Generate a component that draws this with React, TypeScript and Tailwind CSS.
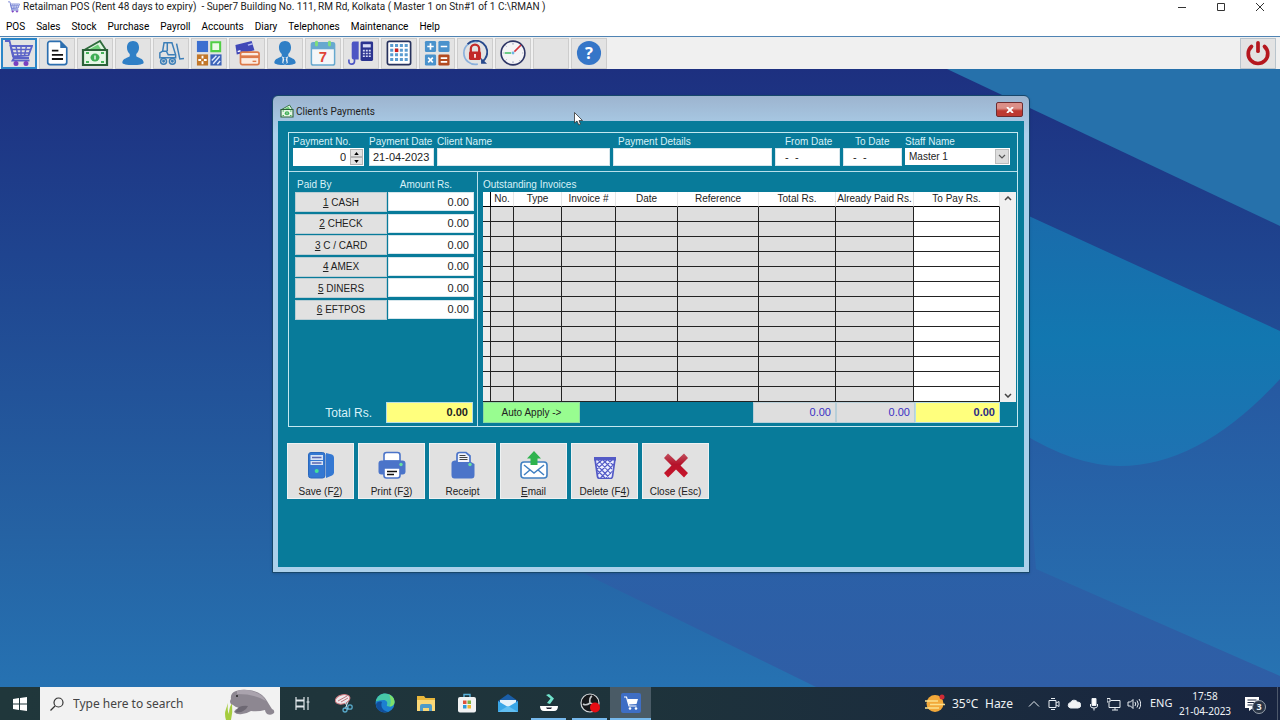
import React from 'react';

const MENU = ['POS', 'Sales', 'Stock', 'Purchase', 'Payroll', 'Accounts', 'Diary', 'Telephones', 'Maintenance', 'Help'];

const CartIcon = ({ className, color = '#5a62c8', wheel = '#7a3fc0' }: { className: string; color?: string; wheel?: string }) => (
  <svg className={className} viewBox="0 0 28 28" fill="none" stroke={color} strokeWidth="1.8">
    <path d="M0 2h4.500l4.500 17h15" />
    <path d="M5.500 7h21.500l-3.500 9.500-15.500 1z" />
    <path d="M6.500 10.500h19M7.500 14h17M11 7l2 10.500M16 7v10M21.500 7l-2 9.500" strokeWidth="1.400" />
    <path d="M9 19l-1.500 2.500h17" />
    <circle cx="11" cy="24.500" r="1.600" fill={wheel} stroke={wheel} />
    <circle cx="21" cy="24.500" r="1.600" fill={wheel} stroke={wheel} />
  </svg>
);

const MoneyIcon = ({ className }: { className: string }) => (
  <svg className={className} viewBox="0 0 28 28" fill="none">
    <path d="M1.500 12L19 2l6 9" fill="#dff5e0" stroke="#2e6b3c" strokeWidth="1.800" />
    <path d="M7 11l10-5.500 3.500 5.500z" fill="#6dcf78" />
    <path d="M2 11h24v15H2z" fill="#e6f7e6" stroke="#2b6238" strokeWidth="2.200" />
    <path d="M5 14h3M20 14h3M5 23h3M20 23h3" stroke="#46b45a" strokeWidth="2.200" />
    <ellipse cx="14" cy="18.500" rx="4.500" ry="4" fill="#3fae55" />
    <path d="M14 16.500v4" stroke="#fff" strokeWidth="1.300" />
  </svg>
);

const DocIcon = () => (
  <svg className="size-[26px]" viewBox="0 0 28 28" fill="none">
    <path d="M6.500 1.500h11l7 7v15.500a2.500 2.500 0 0 1-2.500 2.500h-15.500A2.500 2.500 0 0 1 4 24v-20A2.500 2.500 0 0 1 6.500 1.500z" fill="#fff" stroke="#2c6fb0" strokeWidth="1.800" />
    <path d="M17.500 1.500l7 7h-7z" fill="#2c6fb0" />
    <path d="M8.500 11.500h7M8.500 16h12M8.500 20.500h12" stroke="#111" strokeWidth="2" />
  </svg>
);

const UserIcon = ({ tie }: { tie?: boolean }) => (
  <svg className="size-[26px]" viewBox="0 0 28 28" fill="#2f7fc6">
    <path d="M14 1c4.200 0 6.500 3 6.500 7 0 3-1.200 5.500-3 7v2.500c1.500 1.800 8 2 8 7 0 1.500-5 2.500-11.500 2.500S2.500 26 2.500 24.500c0-5 6.500-5.200 8-7V15c-1.800-1.500-3-4-3-7 0-4 2.300-7 6.500-7z" />
    {tie && <path d="M10.500 17.500l3.500 2 3.500-2-1 3 .5 4-3 2.500-3-2.500.5-4z" fill="#e8eef5" />}
    {tie && <path d="M12.500 19.500h3l-.7 1.500 1.200 4-2 2-2-2 1.200-4z" fill="#2f7fc6" />}
  </svg>
);

const ForkliftIcon = () => (
  <svg className="size-[26px]" viewBox="0 0 28 28" fill="none" stroke="#3d7fb8" strokeWidth="1.600">
    <path d="M5 12l1.500-9h8.500l4 13v4M5 12l-3 2v6M5 12h4l2 4h7M10 3v9" />
    <path d="M20 4l3.500 16.500L28 20M2.500 19h16" />
    <circle cx="6" cy="23" r="3.200" fill="#e1e1e1" />
    <circle cx="15.500" cy="23" r="3.200" fill="#e1e1e1" />
    <circle cx="6" cy="23" r=".8" />
    <circle cx="15.500" cy="23" r=".8" />
  </svg>
);

const TilesIcon = () => (
  <svg className="size-[26px]" viewBox="0 0 28 28" fill="none">
    <path d="M1 1h12v12H1z" fill="#3b6fd0" />
    <path d="M16.500 2.500h9.500v9.500h-9.500z" fill="#eefbe8" stroke="#52cf45" strokeWidth="2.200" />
    <path d="M1 15.500h12v12H1z" fill="#c2772a" />
    <path d="M7 17v3M7 23v3M2.500 21.500h3M8.500 21.500h3" stroke="#fff" strokeWidth="2" />
    <path d="M15.500 15.500h12v12h-12z" fill="#3b62b8" />
    <path d="M17 22l5-5M18.500 25.500l7-8M23 26l3-3.500" stroke="#dfe8fb" strokeWidth="1.600" />
  </svg>
);

const CardsIcon = () => (
  <svg className="size-[26px]" viewBox="0 0 28 28" fill="none">
    <path d="M1.500 5.500L19 1l3 10-19 4.500z" fill="#4048b8" />
    <path d="M4 12.500l3-1" stroke="#fff" strokeWidth="1.600" />
    <path d="M15 5.500l5-1.500" stroke="#b9c0f2" strokeWidth="1.600" />
    <rect x="7" y="13" width="20" height="13.500" rx="2" fill="#fbece2" stroke="#dd7a4a" strokeWidth="1.800" />
    <path d="M7 18h20" stroke="#dd7a4a" strokeWidth="3" />
    <path d="M20 23h4" stroke="#dd7a4a" strokeWidth="1.500" />
  </svg>
);

const CalendarIcon = () => (
  <svg className="size-[26px]" viewBox="0 0 28 28" fill="none">
    <rect x="1.500" y="3" width="25" height="24" rx="2" fill="#f4f6f8" stroke="#67a9cf" strokeWidth="1.600" />
    <path d="M1.500 3h25v7h-25z" fill="#67a9cf" />
    <path d="M7 2.500v3M21 2.500v3" stroke="#7ede7c" strokeWidth="3.200" strokeLinecap="round" />
    <text x="14" y="24" textAnchor="middle" fontSize="16" fontWeight="bold" fontFamily="Liberation Sans, sans-serif" fill="#e04438">7</text>
  </svg>
);

const PhoneIcon = () => (
  <svg className="size-[26px]" viewBox="0 0 28 28" fill="none">
    <path d="M6 1.500h5.500v19.500H6c-1.500 0-2-1-2-3v-13.500c0-2 .5-3 2-3z" fill="#4c55c4" />
    <path d="M7 20v3c0 4-6 4-6 .5V21" stroke="#4c55c4" strokeWidth="1.800" />
    <rect x="13.500" y="1.500" width="13.500" height="21" rx="1.500" fill="#2b3490" />
    <path d="M16 4.500h8.500v3.500H16z" fill="#d8dcf5" />
    <path d="M16 11.500h8.500M16 14.500h8.500M16 17.500h8.500" stroke="#d8dcf5" strokeWidth="1.800" strokeDasharray="2.100 1.100" />
  </svg>
);

const GridIcon = () => (
  <svg className="size-[26px]" viewBox="0 0 28 28" fill="none">
    <rect x="1.500" y="1.500" width="25" height="25" rx="2" fill="#fff" stroke="#26315c" strokeWidth="1.800" />
    {[4, 9, 14, 19].map((y) => (
      <path key={y} d={`M4.500 ${y + 2}h19`} stroke="#5a9bd0" strokeWidth="3.200" strokeDasharray="3.300 1.900" />
    ))}
    <path d="M9.500 9.200h3.800v3.800H9.500z" fill="#cf1c1c" />
  </svg>
);

const CalcIcon = () => (
  <svg className="size-[26px]" viewBox="0 0 28 28" fill="none">
    <rect x="1" y="1" width="12" height="12" rx="1.500" fill="#4a92cc" />
    <rect x="15.500" y="1" width="12" height="12" rx="1.500" fill="#4a92cc" />
    <rect x="1" y="15.500" width="12" height="12" rx="1.500" fill="#4a92cc" />
    <rect x="15.500" y="15.500" width="12" height="12" rx="1.500" fill="#b24a20" />
    <path d="M7 3.500v7M3.500 7h7M18 7h7M4.500 19l5 5M9.500 19l-5 5M18 19.500h7M18 23.500h7" stroke="#fff" strokeWidth="1.800" />
  </svg>
);

const LockIcon = () => (
  <svg className="size-[26px]" viewBox="0 0 28 28" fill="none">
    <path d="M17 26A12.300 12.300 0 1 1 17 2" stroke="#8ab0dc" strokeWidth="1.800" />
    <path d="M6 4.500A12.300 12.300 0 0 1 25 20l-2.500 3" stroke="#27498c" strokeWidth="2" />
    <path d="M20.500 19.500v6h6.500z" fill="#27498c" />
    <path d="M9.500 13V9.500a4.500 4.500 0 0 1 9 0V13" stroke="#c22a2a" strokeWidth="2.400" />
    <rect x="7.500" y="12.500" width="13" height="9" rx="1.500" fill="#c22a2a" />
    <path d="M14 15v4" stroke="#fff" strokeWidth="1.800" />
  </svg>
);

const ClockIcon = () => (
  <svg className="size-[26px]" viewBox="0 0 28 28" fill="none">
    <circle cx="14" cy="14" r="12.800" fill="#f4f4f6" stroke="#2c3464" strokeWidth="1.700" />
    <path d="M14 3v2M14 23v2M3 14h1M24 14h1M6 6l1 1M21 22l1 1M6 22l1-1" stroke="#8d94b0" strokeWidth="1" />
    <path d="M5 14h7" stroke="#3fbf5f" strokeWidth="1.600" />
    <path d="M15.500 12.500l7-7" stroke="#d4313b" strokeWidth="1.600" />
    <circle cx="14" cy="14" r="1.500" fill="#6ab6e6" />
  </svg>
);

const HelpIcon = () => (
  <svg className="size-[26px]" viewBox="0 0 28 28">
    <circle cx="14" cy="14" r="13" fill="#3576c8" />
    <text x="14" y="20.500" textAnchor="middle" fontSize="18" fontWeight="bold" fontFamily="Open Sans, sans-serif" fill="#fff">?</text>
  </svg>
);

const PowerIcon = () => (
  <svg className="size-[26px]" viewBox="0 0 28 28" fill="none" stroke="#b5171e" strokeWidth="4" strokeLinecap="round">
    <path d="M7 7a10.500 10.500 0 1 0 14 0" />
    <path d="M14 3v9" />
  </svg>
);

const TOOLS = [
  { name: 'Point of sale', icon: <CartIcon className="size-7" /> },
  { name: 'Documents', icon: <DocIcon /> },
  { name: 'Payments', icon: <MoneyIcon className="size-7" /> },
  { name: 'Clients', icon: <UserIcon /> },
  { name: 'Suppliers', icon: <ForkliftIcon /> },
  { name: 'Stock', icon: <TilesIcon /> },
  { name: 'Cards', icon: <CardsIcon /> },
  { name: 'Staff', icon: <UserIcon tie /> },
  { name: 'Diary', icon: <CalendarIcon /> },
  { name: 'Telephones', icon: <PhoneIcon /> },
  { name: 'Planner', icon: <GridIcon /> },
  { name: 'Calculator', icon: <CalcIcon /> },
  { name: 'Lock', icon: <LockIcon /> },
  { name: 'Clock', icon: <ClockIcon /> },
  { name: 'Spare', icon: null },
  { name: 'Help', icon: <HelpIcon /> },
];

const TitleBar = () => (
  <header className="flex h-[14px] items-center bg-white pl-2 font-['Roboto',sans-serif] text-[10px] leading-[14px] text-[#222]">
    <CartIcon className="size-3" color="#6a78d0" />
    <h1 className="ml-[3px] whitespace-pre">{'Retailman POS (Rent 48 days to expiry)  - Super7 Building No. 111, RM Rd, Kolkata ( Master 1 on Stn#1 of 1 C:\\RMAN )'}</h1>
    <div className="ml-auto flex pr-px text-[#333]">
      <button aria-label="Minimize" className="flex w-[39px] justify-center">
        <svg className="size-[10px]" viewBox="0 0 10 10" stroke="currentColor"><path d="M1 5.500h8" /></svg>
      </button>
      <button aria-label="Maximize" className="flex w-[39px] justify-center">
        <svg className="size-[10px]" viewBox="0 0 10 10" fill="none" stroke="currentColor"><path d="M1.500 1.500h7v7h-7z" /></svg>
      </button>
      <button aria-label="Close" className="flex w-[39px] justify-center">
        <svg className="size-[10px]" viewBox="0 0 10 10" stroke="currentColor"><path d="M1 1l8 8M9 1L1 9" /></svg>
      </button>
    </div>
  </header>
);

const MenuBar = () => (
  <nav className="flex h-[22px] items-center gap-[11px] bg-white pt-1 pl-[6px] font-['Roboto',sans-serif] text-[10px] leading-[14px] text-black">
    {MENU.map((m) => (
      <button key={m}>{m}</button>
    ))}
  </nav>
);

const Toolbar = () => (
  <div className="flex h-[33px] items-center gap-[2px] border-t border-[#4f83b3] bg-[#f0f0f0] pr-1 pl-[1px]">
    {TOOLS.map((t, i) => (
      <button
        key={t.name}
        aria-label={t.name}
        className={`flex h-[31px] w-9 items-center justify-center bg-[#e3e3e3] ${i === 0 ? 'border-2 border-[#2b86c8]' : 'border border-[#cdcdcd]'}`}
      >
        {t.icon}
      </button>
    ))}
    <button aria-label="Exit" className="ml-auto flex h-[31px] w-9 items-center justify-center border border-[#b9c4cc] bg-[#e3e3e3]">
      <PowerIcon />
    </button>
  </div>
);

const Wallpaper = () => (
  <svg className="absolute inset-0 h-full w-full" viewBox="0 0 1280 618" preserveAspectRatio="none">
    <defs>
      <linearGradient id="sky" x1="0" y1="0" x2="0" y2="1">
        <stop offset="0" stopColor="#1d3080" />
        <stop offset=".3" stopColor="#1f448f" />
        <stop offset=".75" stopColor="#2562a3" />
        <stop offset="1" stopColor="#2672b2" />
      </linearGradient>
      <linearGradient id="band" x1="0" y1="0" x2="0" y2="1">
        <stop offset="0" stopColor="#2463a8" />
        <stop offset="1" stopColor="#2f5ea6" />
      </linearGradient>
      <linearGradient id="drop" x1="0" y1="0" x2="0" y2="1">
        <stop offset="0" stopColor="#1a6bab" />
        <stop offset=".5" stopColor="#1277b0" />
        <stop offset="1" stopColor="#1f72b2" />
      </linearGradient>
      <linearGradient id="low" x1="0" y1="0" x2="0" y2="1">
        <stop offset="0" stopColor="#2657a0" />
        <stop offset="1" stopColor="#2773b2" />
      </linearGradient>
    </defs>
    <path d="M0 0h1280v618H0z" fill="url(#sky)" />
    <path d="M947 0h333v157z" fill="#2671ab" />
    <path d="M575 500L700 290h580v328H816z" fill="url(#band)" />
    <path d="M1020 290h260v317L1036 500z" fill="url(#low)" />
    <path d="M1020 143l260 119v48q-80 87-160 87-45 0-100-34z" fill="url(#drop)" />
  </svg>
);

const Field = ({ id, label, className, labelClass = '', value = '' }: { id: string; label: string; className: string; labelClass?: string; value?: string }) => (
  <div className={className}>
    <label htmlFor={id} className={`block h-[14px] text-[10px] leading-[16px] whitespace-nowrap text-[#d8f2f8] ${labelClass}`}>{label}</label>
    <input id={id} defaultValue={value} className="block h-[18px] w-full border border-[#d6e6ec] bg-white px-[3px] text-[11px] text-[#222]" />
  </div>
);

const PaymentHeader = () => (
  <div className="flex h-[39px] gap-[3px] border-b border-[#b8e0ea] pt-px pr-[7px] pl-1">
    <div className="w-[73px]">
      <label htmlFor="payno" className="block h-[14px] text-[10px] leading-[16px] whitespace-nowrap text-[#d8f2f8]">Payment No.</label>
      <div className="flex h-[18px] w-[71px] items-center bg-white">
        <input id="payno" defaultValue="0" className="h-full w-full min-w-0 pr-1 text-right text-[11px] text-[#222]" />
        <div className="flex h-4 w-[14px] shrink-0 flex-col justify-between pr-px">
          <button aria-label="Next payment" className="flex h-2 items-center justify-center border border-[#b4b4b4] bg-[#e3e3e3]">
            <svg className="h-[3px] w-[5px]" viewBox="0 0 6 4"><path d="M3 0l3 4H0z" /></svg>
          </button>
          <button aria-label="Previous payment" className="flex h-2 items-center justify-center border border-[#b4b4b4] bg-[#e3e3e3]">
            <svg className="h-[3px] w-[5px]" viewBox="0 0 6 4"><path d="M3 4l3-4H0z" /></svg>
          </button>
        </div>
      </div>
    </div>
    <Field id="paydate" label="Payment Date" value="21-04-2023" className="w-[65px]" />
    <Field id="client" label="Client Name" className="min-w-0 flex-1" />
    <Field id="details" label="Payment Details" labelClass="pl-[5px]" className="w-[159px]" />
    <Field id="from" label="From Date" labelClass="pl-[10px]" value="  -  -" className="w-[65px]" />
    <Field id="to" label="To Date" labelClass="pl-3" value="  -  -" className="w-[59px]" />
    <div className="w-[105px]">
      <label htmlFor="staff" className="block h-[14px] text-[10px] leading-[16px] text-[#d8f2f8]">Staff Name</label>
      <div className="relative">
        <select id="staff" className="block h-[17px] w-full appearance-none bg-white pl-1 text-[10px] text-[#222]">
          <option>Master 1</option>
        </select>
        <span className="pointer-events-none absolute top-px right-px flex h-[15px] w-[14px] items-center justify-center border border-[#bcbcbc] bg-[#dcdcdc]">
          <svg className="h-[5px] w-2" viewBox="0 0 8 5" fill="none" stroke="#555" strokeWidth="1.200"><path d="M1 1l3 3 3-3" /></svg>
        </span>
      </div>
    </div>
  </div>
);

const METHODS = [
  ['1', ' CASH'],
  ['2', ' CHECK'],
  ['3', ' C / CARD'],
  ['4', ' AMEX'],
  ['5', ' DINERS'],
  ['6', ' EFTPOS'],
];

const PaidBy = () => (
  <section className="flex w-[189px] shrink-0 flex-col border-r border-[#b8e0ea] pt-[5px] pr-[3px] pb-[3px] pl-[6px]">
    <div className="flex h-[15px] justify-between pr-[22px] pl-[2px] text-[10px] leading-[15px] text-[#d8f2f8]">
      <span>Paid By</span>
      <span>Amount Rs.</span>
    </div>
    <div className="flex h-32 flex-col justify-between">
      {METHODS.map(([key, name]) => (
        <div key={key} className="flex h-5 items-start gap-px">
          <button className="h-5 w-[92px] shrink-0 border border-[#b9cdd4] bg-[#e1e1e1] text-[10px] text-[#222]">
            <u>{key}</u>{name}
          </button>
          <input aria-label={name} defaultValue="0.00" className="h-[19px] w-full min-w-0 border border-[#d6e6ec] bg-white pr-1 text-right text-[11px] text-[#222]" />
        </div>
      ))}
    </div>
    <div className="mt-auto flex items-center gap-[14px]">
      <label htmlFor="total" className="ml-auto text-[12px] text-[#d8f2f8]">Total Rs.</label>
      <input id="total" defaultValue="0.00" className="mr-px h-[21px] w-[87px] border border-[#b8dfe4] bg-[#ffff7d] pr-1 pb-px text-right text-[11px] font-bold text-[#222]" />
    </div>
  </section>
);

const COLUMNS = [
  { label: '', width: 'w-2' },
  { label: 'No.', width: 'w-[23px]' },
  { label: 'Type', width: 'w-12' },
  { label: 'Invoice #', width: 'w-[54px]' },
  { label: 'Date', width: 'w-[62px]' },
  { label: 'Reference', width: 'w-[81px]' },
  { label: 'Total Rs.', width: 'w-[77px]' },
  { label: 'Already Paid Rs.', width: 'w-[78px]' },
  { label: 'To Pay Rs.', width: 'w-[86px]' },
];

const cellColor = (i: number) => {
  if (i === 0) return 'bg-[#ececec]';
  return i === COLUMNS.length - 1 ? 'bg-white' : 'bg-[#dedede]';
};

const Invoices = () => (
  <section className="flex min-w-0 flex-1 flex-col pt-[5px] pl-[5px]">
    <h3 className="h-[15px] text-[10px] leading-[15px] text-[#d8f2f8]">Outstanding Invoices</h3>
    <div className="flex">
      <table className="w-[517px] table-fixed border-separate border-spacing-0 text-[10px] text-[#222]">
        <thead>
          <tr>
            {COLUMNS.map((c, i) => (
              <th
                key={c.label}
                className={`h-[15px] border-r border-b border-b-black bg-white p-0 leading-[14px] font-normal whitespace-nowrap ${c.width} ${i === 0 ? 'border-r-black' : 'border-r-[#e6e6e6]'}`}
              >
                {c.label}
              </th>
            ))}
          </tr>
        </thead>
        <tbody>
          {Array.from({ length: 13 }, (_, r) => (
            <tr key={r}>
              {COLUMNS.map((c, i) => (
                <td key={c.label} className={`h-[15px] border-r border-b border-[#222] p-0 ${cellColor(i)}`} />
              ))}
            </tr>
          ))}
        </tbody>
      </table>
      <div className="flex w-4 flex-col items-center justify-between bg-[#f0f0f0] py-1">
        <svg className="h-[5px] w-2" viewBox="0 0 8 5" fill="none" stroke="#444" strokeWidth="1.500"><path d="M1 4l3-3 3 3" /></svg>
        <svg className="h-[5px] w-2" viewBox="0 0 8 5" fill="none" stroke="#444" strokeWidth="1.500"><path d="M1 1l3 3 3-3" /></svg>
      </div>
    </div>
    <div className="flex h-[21px] pr-[17px]">
      <button className="w-[97px] border border-[#8edba0] bg-[#98fd90] text-[10px] text-[#222]">Auto Apply -&gt;</button>
      <input aria-label="Total" defaultValue="0.00" className="ml-auto w-[83px] border border-[#b8cfd8] bg-[#dedede] pr-1 text-right text-[11px] text-[#3a2fc4]" />
      <input aria-label="Already paid" defaultValue="0.00" className="w-[79px] border border-[#b8cfd8] bg-[#dedede] pr-1 text-right text-[11px] text-[#3a2fc4]" />
      <input aria-label="To pay" defaultValue="0.00" className="w-[85px] border border-[#b8dfe4] bg-[#ffff7d] pr-1 text-right text-[11px] font-bold text-[#2a2a86]" />
    </div>
  </section>
);

const ACTIONS = [
  {
    id: 'save',
    label: <>Save (F<u>2</u>)</>,
    icon: (
      <>
        <path d="M19 2l6 1.500q2 .8 2 3v15q0 2-2 3L19 27z" fill="#3478d2" />
        <rect x="1.500" y="1.500" width="16.500" height="25.500" rx="2.500" fill="#3478d2" stroke="#2a68bd" />
        <path d="M3.500 4h12.500v5H3.500zM3.500 10h12.500v4H3.500z" fill="#d5e2f5" />
        <path d="M5 6.500h9.500M5 12h9.500" stroke="#5a67b0" strokeWidth="1.500" />
        <circle cx="9.700" cy="20" r="2" fill="#42e29a" />
      </>
    ),
  },
  {
    id: 'print',
    label: <>Print (F<u>3</u>)</>,
    icon: (
      <>
        <path d="M6 10V4q0-2.500 2.500-2.500h11Q22 1.500 22 4v6z" fill="#fff" stroke="#4b74c9" strokeWidth="1.600" />
        <path d="M3.500 9.500h21q3 0 3 3v8q0 3-3 3h-21q-3 0-3-3v-8q0-3 3-3z" fill="#4b74c9" />
        <path d="M6 17h16v7.500q0 2.500-2.500 2.500h-11Q6 27 6 24.500z" fill="#fff" stroke="#4b74c9" strokeWidth="1.600" />
        <path d="M9 20.500h10M9 23.500h7" stroke="#111" strokeWidth="1.500" />
        <circle cx="23" cy="13.500" r="1.700" fill="#69e0a0" />
      </>
    ),
  },
  {
    id: 'receipt',
    label: <>Receipt</>,
    icon: (
      <>
        <path d="M8 12V4q0-2.500 2.500-2.500h6.500L21 5v7z" fill="#f0f3fb" stroke="#4b74c9" strokeWidth="1.700" />
        <path d="M10.500 4.500h6M10.500 6.500h8M10.500 8.500h8" stroke="#444" strokeWidth="1" />
        <path d="M5.500 9.500h2L9 11h13l3.500 2v11q0 3.500-3 3.500h-17q-3 0-3-3.500V12.500q0-2.500 3-3z" fill="#4b74c9" />
        <circle cx="21" cy="13.500" r="1.700" fill="#69e0a0" />
      </>
    ),
  },
  {
    id: 'email',
    label: <><u>E</u>mail</>,
    icon: (
      <>
        <rect x="1" y="11" width="26" height="16" rx="3" fill="#fff" stroke="#4180c2" strokeWidth="1.600" />
        <path d="M4 14l10 8 10-8M4 24l6.500-5.500M24 24l-6.500-5.500" fill="none" stroke="#4180c2" strokeWidth="1.500" />
        <path d="M14 0l7 7.500h-3.500V14h-7V7.500H7z" fill="#2fb34e" />
      </>
    ),
  },
  {
    id: 'delete',
    label: <>Delete (F<u>4</u>)</>,
    icon: (
      <>
        <path d="M4 8h20l-2.500 17.500q-.3 2-2.500 2H9q-2.200 0-2.500-2z" fill="#eef0ff" stroke="#535ac6" strokeWidth="1.700" />
        <path d="M7 9l13 14M12 9l9 9M17 9l5 5M5 13l13 13.500M6 19l8 8M21 9L7 23M16 9L6 18M11 9l-5 4M23 13L9.500 27M21.500 20L15 27" stroke="#535ac6" strokeWidth="1.100" />
        <path d="M3 6h22v3.500H3z" fill="#535ac6" />
      </>
    ),
  },
  {
    id: 'close',
    label: <>Close (Esc)</>,
    icon: (
      <>
        <defs>
          <linearGradient id="cross" x1="0" y1="0" x2="0" y2="1">
            <stop offset="0" stopColor="#c0505e" />
            <stop offset=".45" stopColor="#b5122a" />
            <stop offset="1" stopColor="#c9142a" />
          </linearGradient>
        </defs>
        <path d="M6 2.500L14 10l8-7.500 4 4.500-7.500 7.500L26 22l-4 4.500-8-8-8 8L2 22l7.500-7.500L2 7z" fill="url(#cross)" />
      </>
    ),
  },
];

const PaymentsWindow = () => (
  <section className="absolute top-[26px] left-[272px] w-[758px] rounded-t-md border border-[#17476b] bg-linear-to-b from-[#9db4cf] to-[#abd0eb] to-8% px-[5px] pb-[5px] shadow-sm">
    <div className="flex h-[25px] items-center pt-[5px] pr-px pl-[2px] font-['Roboto',sans-serif] text-[10px] text-[#222]">
      <MoneyIcon className="size-[14px]" />
      <h2 className="ml-[2px]">Client's Payments</h2>
      <button aria-label="Close window" className="mb-[3px] ml-auto flex h-[15px] w-[27px] items-center justify-center rounded-[2px] border border-[#6d2c30] bg-linear-to-b from-[#dc8f88] from-40% to-[#bd3a32] to-60%">
        <svg className="h-[6px] w-2" viewBox="0 0 8 6" stroke="#fff" strokeWidth="1.800"><path d="M1 0l6 6M7 0L1 6" /></svg>
      </button>
    </div>
    <div className="h-[446px] bg-[#087b9a] pt-[11px]">
      <form className="mr-[6px] ml-[10px] border border-[#c4e8f0]">
        <PaymentHeader />
        <div className="flex h-[254px]">
          <PaidBy />
          <Invoices />
        </div>
      </form>
      <div className="mt-4 flex gap-1 pl-[9px]">
        {ACTIONS.map((a) => (
          <button key={a.id} className="flex h-14 w-[67px] flex-col items-center justify-between border border-[#eef2f3] bg-[#e1e1e1] pt-[7px] text-[10px] leading-[12px] text-[#222]">
            <svg className="size-7" viewBox="0 0 28 28">{a.icon}</svg>
            <span>{a.label}</span>
          </button>
        ))}
      </div>
    </div>
  </section>
);

const ManateeIcon = () => (
  <svg className="h-[33px] w-14" viewBox="0 0 56 33" fill="none">
    <path d="M2 33Q0 27 2 22l2-6q-1 8 1 11l1 6zM6 33q-2-7 0-13l2-4q1 9-1 17z" fill="#a5cc3e" />
    <path d="M7 12Q6 6 12 4q6-2 12-1 13 1 19 11 3 5 5 8 3 1 2 4-3 3-7 1-2-2-2-4-7 2-14 1-5 3-9 3-5 1-8-2 1-3 5-4-4-1-6-3-3-1-3-3 0-2 1-3z" fill="#8d8791" />
    <path d="M13 4q8-3 18 1 8 3 11 9-11-7-29-7z" fill="#aaa3ad" />
    <path d="M22 22q-6 5-11 3l4-5q5-2 9-1z" fill="#6d6873" />
    <circle cx="13" cy="9" r="1" fill="#222" />
  </svg>
);

const APPS = [
  {
    name: 'Task View',
    state: '',
    icon: <path d="M3 4v3h8V4M3 17v-3h8v3M3 8h8v5H3zM15 4v13M13.500 9h3" fill="none" stroke="#dfe6ea" strokeWidth="1.200" />,
  },
  {
    name: 'Snip & Sketch',
    state: '',
    icon: (
      <>
        <ellipse cx="8.500" cy="6.500" rx="7.500" ry="4.500" transform="rotate(-15 8 6)" fill="#f0e9ec" stroke="#d07a80" />
        <path d="M4 8l9-5M7 9l7-4" stroke="#b05560" strokeWidth=".8" />
        <path d="M11 8l3 9M14 9l-3 7" stroke="#cfe3ec" />
        <circle cx="16" cy="14" r="2.200" fill="none" stroke="#58a9c9" strokeWidth="1.300" />
        <circle cx="11" cy="17" r="2" fill="none" stroke="#58a9c9" strokeWidth="1.300" />
      </>
    ),
  },
  {
    name: 'Edge',
    state: '',
    icon: (
      <>
        <circle cx="10" cy="10" r="9.500" fill="#1c7fd0" />
        <path d="M.7 8.500C2 3 6 .5 10 .5c6 0 9.500 4 9.500 8 0 3-2.500 5-5.500 5-2 0-2.500-1-2-2 1-2-.5-4.500-3.500-4.500-3 0-6 1-7.800 1.500z" fill="#46c8a8" />
        <path d="M14 1.500c4 2 5.500 5 5.500 7.500 0 2.500-2 4.500-5 4.500 2-3 1.500-8-.5-12z" fill="#7fe06a" />
        <path d="M7 9c-2 4 1 9.500 6 9.300-6 2.700-12-1-12-7C2 9 4.500 8 7 9z" fill="#124f9c" />
      </>
    ),
  },
  {
    name: 'File Explorer',
    state: '',
    icon: (
      <>
        <path d="M1 3h7l1.500 2H19v13H1z" fill="#e8b73c" />
        <path d="M1 7h18v11H1z" fill="#fbd878" />
        <path d="M4 18v-5q0-2 2-2h8q2 0 2 2v5h-3v-3H7v3z" fill="#4f9bc9" />
      </>
    ),
  },
  {
    name: 'Store',
    state: '',
    icon: (
      <>
        <path d="M7 5V1.500h6V5" fill="none" stroke="#58b2dc" strokeWidth="1.400" />
        <rect x="1" y="4" width="18" height="15.500" rx="2" fill="#f1f2f3" />
        <path d="M6 7.500h3.500V11H6z" fill="#e0523a" />
        <path d="M10.500 7.500H14V11h-3.500z" fill="#7cb342" />
        <path d="M6 12h3.500v3.500H6z" fill="#2d9cdb" />
        <path d="M10.500 12H14v3.500h-3.500z" fill="#f3b72f" />
      </>
    ),
  },
  {
    name: 'Mail',
    state: '',
    icon: (
      <>
        <path d="M0 8l10-7 10 7v3H0z" fill="#1a5ea8" />
        <path d="M2 7h16v8H2z" fill="#e6f2fa" />
        <path d="M0 8l10 6 10-6v11H0z" fill="#3aa6e6" />
        <path d="M0 19l10-6 10 6z" fill="#61bff2" />
      </>
    ),
  },
  {
    name: 'Filmora',
    state: 'open',
    icon: (
      <>
        <path d="M7 2l4.500 3.500L8 10l3 1 4-5.500L10 1z" fill="#71e3cd" />
        <path d="M1 13h18q0 5-4 5H5q-4 0-4-5z" fill="#fff" />
        <path d="M7 14.500h6l-1 1.500H8z" fill="#223" />
      </>
    ),
  },
  {
    name: 'OBS Studio',
    state: 'open',
    icon: (
      <>
        <circle cx="10" cy="10" r="9" fill="#16181b" stroke="#d5d8db" strokeWidth="1.200" />
        <path d="M10 10q-1-5 2-7M10 10q5 1 6 4M10 10q-4 3-7 1" fill="none" stroke="#c3c7ca" strokeWidth="1.600" />
        <circle cx="15" cy="14.500" r="5" fill="#e60d14" />
      </>
    ),
  },
  {
    name: 'Retailman POS',
    state: 'active',
    icon: (
      <>
        <rect x="0" y="0" width="20" height="20" rx="2" fill="#3e6ec4" />
        <path d="M3 4h2.500l2.500 9h7.500" fill="none" stroke="#fff" strokeWidth="1.200" />
        <path d="M6.500 6h10.500l-1.500 5-8 .5z" fill="#fff" />
        <circle cx="9" cy="15.500" r="1.300" fill="#fff" />
        <circle cx="15" cy="15.500" r="1.300" fill="#fff" />
      </>
    ),
  },
];

const appStyle: Record<string, string> = {
  '': 'w-[41px] border-transparent',
  open: 'mx-[3px] w-[35px] border-[#76b9ed]',
  active: 'w-[41px] border-[#76b9ed] bg-[#4a5b66]',
};

const TrayIcon = ({ children }: { children: React.ReactNode }) => (
  <svg className="h-[14px] w-[14px] shrink-0" viewBox="0 0 14 14" fill="none" stroke="#e8edf2" strokeWidth="1">{children}</svg>
);

const Taskbar = () => (
  <footer className="flex h-[33px] items-stretch bg-linear-to-r from-[#20373b] via-[#1e333b] to-[#182440] font-['Noto_Sans',sans-serif] text-[11px] text-[#eef2f5]">
    <button aria-label="Start" className="flex w-10 items-center justify-center">
      <svg className="size-[14px]" viewBox="0 0 14 14" fill="#fff"><path d="M0 2l6-1v5.500H0zM7 .9L14 0v6.500H7zM0 7.500h6V13l-6-1zM7 7.500h7V14l-7-.9z" /></svg>
    </button>
    <div className="flex w-60 items-center bg-[#f2f2f2] pl-[10px] text-[#444]">
      <svg className="size-[14px] shrink-0" viewBox="0 0 14 14" fill="none" stroke="#333" strokeWidth="1.200"><circle cx="8.500" cy="5.500" r="4.500" /><path d="M5 9l-4.500 4.500" /></svg>
      <input aria-label="Search" placeholder="Type here to search" className="ml-[9px] min-w-0 flex-1 text-[12px] placeholder:text-[#444]" />
      <ManateeIcon />
    </div>
    <div className="ml-[2px] flex">
      {APPS.map((a) => (
        <button key={a.name} aria-label={a.name} className={`flex items-center justify-center border-b-2 ${appStyle[a.state]}`}>
          <svg className="size-5" viewBox="0 0 20 20">{a.icon}</svg>
        </button>
      ))}
    </div>
    <div className="ml-auto flex items-center">
      <svg className="size-5" viewBox="0 0 20 20">
        <circle cx="10" cy="9.500" r="8.500" fill="#f2a93a" />
        <path d="M0 7h13M5 10.500h15M0 14h14" stroke="#fbe08c" strokeWidth="1.600" />
        <circle cx="17" cy="3" r="2.500" fill="#cf2b35" />
      </svg>
      <span className="ml-[7px] w-[33px] text-[12px]">35°C</span>
      <span className="w-[42px] text-[12px]">Haze</span>
      <div className="flex gap-[6px]">
        <TrayIcon><path d="M2 9.500l5-5 5 5" /></TrayIcon>
        <TrayIcon><path d="M2 3.500h7v7H2zM9 6l3-1.500v5L9 8M4 1.500h4M4 12.500h4" /></TrayIcon>
        <TrayIcon><path d="M3.500 11a2.800 2.800 0 0 1 0-5.500 4 4 0 0 1 7-.5 3 3 0 0 1 .5 6z" fill="#f2f4f6" /></TrayIcon>
        <TrayIcon><path d="M5 1.500h4v7H5z" fill="#fff" /><path d="M3.500 7v2q0 2 3.500 2t3.500-2V7M7 11v2.500" /></TrayIcon>
        <TrayIcon><path d="M3.500 3.500H13v7H2V6M5 13h6M8 10.500V13M0 1.500h3V5H0z" /></TrayIcon>
        <TrayIcon><path d="M1 5h2.500L6 2.500v9L3.500 9H1zM8 5q1.500 2 0 4M10 3.500q2.500 3.500 0 7M12 2q3.500 5 0 10" /></TrayIcon>
      </div>
      <span className="ml-[9px] w-[27px]">ENG</span>
      <div className="w-14 text-center text-[10px] leading-[15px]">
        <div>17:58</div>
        <div>21-04-2023</div>
      </div>
      <button aria-label="Notifications" className="relative mr-3 ml-3 h-5 w-5">
        <svg className="size-[14px]" viewBox="0 0 14 14" fill="#fff"><path d="M0 0h14v11H8l-4 3v-3H0z" /><path d="M2.500 3h9M2.500 5.500h9M2.500 8h5" stroke="#1a2740" /></svg>
        <span className="absolute top-[6px] left-[7px] size-[14px] rounded-full border border-[#9aa3ad] bg-[#2a3547] text-center text-[9px] leading-[12px] font-bold">3</span>
      </button>
      <span className="mr-[2px] h-full w-px bg-[#4d586b]" />
    </div>
  </footer>
);

export default function App() {
  return (
    <div className="flex min-h-screen flex-col font-['Liberation_Sans',sans-serif]">
      <TitleBar />
      <MenuBar />
      <Toolbar />
      <main className="relative flex-1 overflow-hidden">
        <Wallpaper />
        <PaymentsWindow />
        <svg className="absolute top-[43px] left-[574px] h-[14px] w-[9px]" viewBox="0 0 9 14">
          <path d="M.5.500v10.500l2.500-2 1.800 4 1.700-.8L5 8.500h3.500z" fill="#fff" stroke="#333" strokeWidth=".8" />
        </svg>
      </main>
      <Taskbar />
    </div>
  );
}
